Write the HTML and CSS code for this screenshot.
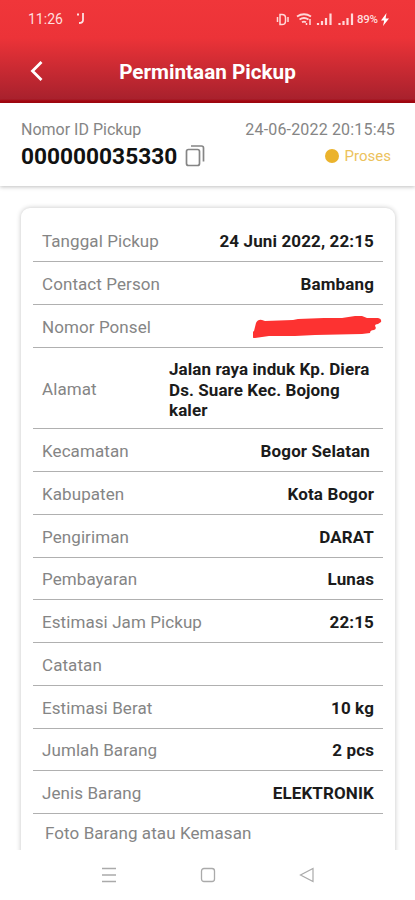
FILE: index.html
```html
<!DOCTYPE html>
<html lang="id">
<head>
    <meta charset="UTF-8">
    <title>Permintaan Pickup</title>
    <meta name="viewport" content="width=device-width, initial-scale=1.0">
    <link rel="stylesheet" href="styles.css">
</head>
<body>

    <header class="header">
        <div class="status-bar">
            <span class="clock">11:26</span>
            <svg class="status-app" width="10" height="14" viewBox="0 0 10 14" fill="none" stroke="#fff" stroke-opacity=".85" stroke-width="1.8">
                <path d="M0 2.500h2M6 1v7q0 3-4 3"/>
            </svg>
            <svg class="status-icons" width="82" height="16" viewBox="0 0 82 16" fill="none" stroke="#ffd9d9" stroke-width="1.5">
                <path d="M2.500 6v5M13 6v5"/>
                <path d="M5 3.500h2q3.500 0 3.500 3.300v3.400q0 3.300-3.500 3.300h-2z"/>
                <path stroke-width="1.800" d="M22 5.500q7-4.500 14 0M24.500 8.500q4.500-3 9 0M27 11.300q2-1.300 4 0"/>
                <path d="M35 8v6M31.500 12v2"/>
                <path stroke-width="2.200" d="M43 12v2M47 10v4M51 7v7M55.500 2.500v11.500M64.500 12v2M68.500 10v4M72.500 7v7M77 2.500v11.500"/>
            </svg>
            <span class="battery">89%</span>
            <svg class="bolt" width="8" height="13" viewBox="0 0 8 13" fill="#fff">
                <path d="M5.500 0L0 7.500h3.200L2 13l6-7.500H4.600z"/>
            </svg>
        </div>
        <div class="title-bar">
            <svg class="back" width="14" height="20" viewBox="0 0 14 20" fill="none" stroke="#fff" stroke-width="2.800">
                <path d="M11.500 1L2.500 10l9 9"/>
            </svg>
            <h1 class="title">Permintaan Pickup</h1>
        </div>
    </header>

    <section class="summary">
        <div>
            <div class="summary-label">Nomor ID Pickup</div>
            <div class="pickup-id">
                <span class="pickup-number">000000035330</span>
                <svg width="20" height="22" viewBox="0 0 20 22" fill="none" stroke="#858585" stroke-width="1.700">
                    <rect x="1.500" y="4.500" width="13" height="16" rx="2"/>
                    <path d="M6 1h10.500q2 0 2 2v13.500"/>
                </svg>
            </div>
        </div>
        <div class="summary-right">
            <div class="summary-date">24-06-2022 20:15:45</div>
            <div class="state"><span class="dot"></span>Proses</div>
        </div>
    </section>

    <main class="content">
        <div class="card">
            <div class="row"><span class="label">Tanggal Pickup</span><span class="value">24 Juni 2022, 22:15</span></div>
            <div class="row"><span class="label">Contact Person</span><span class="value">Bambang</span></div>
            <div class="row">
                <span class="label">Nomor Ponsel</span>
                <svg class="scribble" width="131" height="22" viewBox="0 0 131 22">
                    <path fill="#fd3231" d="M3 7Q5 3 9 4l3 1 28-1 5-1 26-1 18 0 13-2 7 0 5 2 11 0q4 1 3 4l-3 2q-3 0-3 2 2 3-1 4-4 0-4 3l-8 1-47 1-20 1-26 0-14 2q-5 0-4-5l3-2z"/>
                </svg>
            </div>
            <div class="row row-address"><span class="label">Alamat</span><span class="value address">Jalan raya induk Kp. Diera<br>Ds. Suare Kec. Bojong<br>kaler</span></div>
            <div class="row"><span class="label">Kecamatan</span><span class="value trailing">Bogor Selatan</span></div>
            <div class="row"><span class="label">Kabupaten</span><span class="value">Kota Bogor</span></div>
            <div class="row"><span class="label">Pengiriman</span><span class="value">DARAT</span></div>
            <div class="row"><span class="label">Pembayaran</span><span class="value">Lunas</span></div>
            <div class="row"><span class="label">Estimasi Jam Pickup</span><span class="value">22:15</span></div>
            <div class="row"><span class="label">Catatan</span></div>
            <div class="row"><span class="label">Estimasi Berat</span><span class="value">10 kg</span></div>
            <div class="row"><span class="label">Jumlah Barang</span><span class="value">2 pcs</span></div>
            <div class="row"><span class="label">Jenis Barang</span><span class="value">ELEKTRONIK</span></div>
            <div class="photo-label">Foto Barang atau Kemasan</div>
        </div>
    </main>

    <nav class="nav-bar">
        <svg width="16" height="16" viewBox="0 0 16 16" fill="none" stroke="#aaa" stroke-width="1.300">
            <path d="M1 1.500h14M1 8h14M1 14.500h14"/>
        </svg>
        <svg width="16" height="16" viewBox="0 0 16 16" fill="none" stroke="#aaa" stroke-width="1.300">
            <rect x="1.500" y="1.500" width="13" height="13" rx="2.500"/>
        </svg>
        <svg width="16" height="16" viewBox="0 0 16 16" fill="none" stroke="#aaa" stroke-width="1.200">
            <path d="M14 1.500v13L1.500 8z"/>
        </svg>
    </nav>

</body>
</html>
```
FILE: styles.css
```css
* {
    box-sizing: border-box;
}

body {
    margin: 0;
    height: 900px;
    display: flex;
    flex-direction: column;
    overflow: hidden;
    font-family: Roboto, "Liberation Sans", sans-serif;
    background-color: #fff;
}

.header {
    flex: none;
    height: 103px;
    background: linear-gradient(#f0363a 0, #ec3338 38px, #a8212d 99px, #a60710 101px);
}

.status-bar {
    display: flex;
    align-items: center;
    height: 38px;
    padding: 0 26px 0 28px;
    color: #ffdede;
}

.clock {
    width: 49px;
    font-size: 14px;
}

.status-icons {
    margin-left: auto;
}

.battery {
    width: 24px;
    font-size: 11.5px;
    font-weight: 500;
    letter-spacing: -0.3px;
}

.title-bar {
    display: grid;
    grid-template-columns: 30px 1fr 30px;
    align-items: center;
    height: 65px;
    padding: 0 30px;
}

.title {
    margin: 0;
    padding-top: 2px;
    font-size: 20.7px;
    font-weight: 700;
    text-align: center;
    color: #fff;
}

.summary {
    flex: none;
    display: flex;
    justify-content: space-between;
    height: 83px;
    padding: 17px 20px 0 21px;
    background-color: #fff;
    box-shadow: 0 1px 4px rgba(0,0,0,0.25);
    color: #858585;
}

.summary-label,
.summary-date {
    font-size: 16px;
    line-height: 20px;
}

.summary-date {
    letter-spacing: 0.17px;
}

.pickup-id {
    display: flex;
    align-items: center;
    gap: 8px;
    height: 32px;
}

.pickup-number {
    font-size: 22.7px;
    font-weight: 700;
    color: #111;
}

.summary-right {
    text-align: right;
}

.state {
    display: flex;
    align-items: center;
    justify-content: flex-end;
    height: 32px;
    padding-right: 4px;
    font-size: 15px;
    color: #ecc25c;
}

.dot {
    width: 14px;
    height: 14px;
    margin-right: 6px;
    border-radius: 50%;
    background-color: #ebb32c;
}

.content {
    flex: 1;
    min-height: 0;
    padding: 22px 20px 0 21px;
    overflow: hidden;
}

.card {
    height: 700px;
    padding: 11.5px 12px 0;
    border-radius: 9px;
    background-color: #fff;
    box-shadow: 0 0 5px rgba(0,0,0,0.24);
}

.row {
    display: flex;
    align-items: center;
    justify-content: space-between;
    height: 42.75px;
    padding: 2px 9px 0;
    border-bottom: 1px solid #b0b0b0;
}

.row-address {
    height: 81.6px;
}

.label,
.photo-label {
    font-size: 17px;
    letter-spacing: 0.08px;
    color: #858585;
}

.value {
    font-size: 17px;
    font-weight: 700;
    letter-spacing: 0.12px;
    color: #1b1b1b;
}

.address {
    width: 205px;
    padding-top: 2px;
    line-height: 20.5px;
    letter-spacing: 0.08px;
}

.trailing {
    padding-right: 4px;
}

.scribble {
    margin-right: -10px;
}

.photo-label {
    padding: 9px 12px;
}

.nav-bar {
    flex: none;
    display: flex;
    justify-content: center;
    align-items: center;
    gap: 83px;
    height: 50px;
    background-color: #fff;
}
```
